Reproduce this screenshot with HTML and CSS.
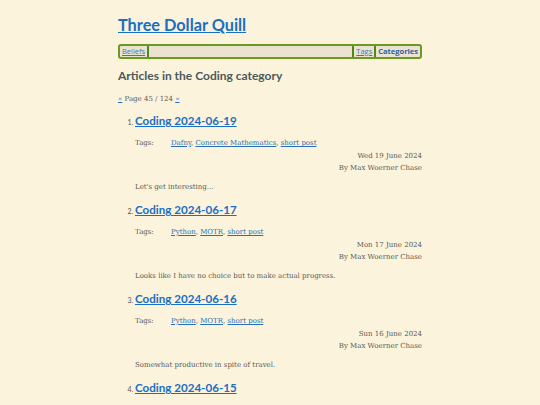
FILE: index.html
```html
<!DOCTYPE html>
<html>
<head>
<meta charset="utf-8">
<link rel="stylesheet" href="styles.css">
</head>
<body>
<div class="page">
  <header class="site-header">
    <h1 class="site-title"><a href="#">Three Dollar Quill</a></h1>
    <nav class="nav">
      <a class="nav-link" href="#">Beliefs</a>
      <span class="nav-fill"></span>
      <a class="nav-link" href="#">Tags</a>
      <a class="nav-link current" href="#">Categories</a>
    </nav>
  </header>
  <main>
    <h2 class="section-title">Articles in the Coding category</h2>
    <p class="pager"><a href="#">«</a> Page 45 / 124 <a href="#">»</a></p>
    <ol class="articles">
      <li class="article">
        <h3 class="article-title"><a href="#">Coding 2024-06-19</a></h3>
        <div class="tags"><span class="tags-label">Tags:</span><span class="tags-list"><a href="#">Dafny</a>, <a href="#">Concrete Mathematics</a>, <a href="#">short post</a></span></div>
        <div class="meta"><div>Wed 19 June 2024</div><div>By Max Woerner Chase</div></div>
        <p class="summary">Let's get interesting...</p>
      </li>
      <li class="article">
        <h3 class="article-title"><a href="#">Coding 2024-06-17</a></h3>
        <div class="tags"><span class="tags-label">Tags:</span><span class="tags-list"><a href="#">Python</a>, <a href="#">MOTR</a>, <a href="#">short post</a></span></div>
        <div class="meta"><div>Mon 17 June 2024</div><div>By Max Woerner Chase</div></div>
        <p class="summary">Looks like I have no choice but to make actual progress.</p>
      </li>
      <li class="article">
        <h3 class="article-title"><a href="#">Coding 2024-06-16</a></h3>
        <div class="tags"><span class="tags-label">Tags:</span><span class="tags-list"><a href="#">Python</a>, <a href="#">MOTR</a>, <a href="#">short post</a></span></div>
        <div class="meta"><div>Sun 16 June 2024</div><div>By Max Woerner Chase</div></div>
        <p class="summary">Somewhat productive in spite of travel.</p>
      </li>
      <li class="article">
        <h3 class="article-title"><a href="#">Coding 2024-06-15</a></h3>
      </li>
    </ol>
  </main>
</div>
</body>
</html>
```
FILE: styles.css
```css
html, body {
  margin: 0;
  padding: 0;
  background: #fbf3dc;
}
body {
  font-family: "DejaVu Serif", serif;
  font-size: 7px;
  color: #5a5a55;
}
a {
  color: #2a6fb5;
}
.page {
  width: 304px;
  margin: 0 auto;
}
.site-header {
  padding-top: 14px;
}
.site-title {
  margin: 0;
  font-family: Lato, sans-serif;
  font-weight: 700;
  font-size: 16.3px;
  line-height: 22px;
}
.site-title a {
  color: #1a6ec4;
}
.nav {
  display: flex;
  align-items: stretch;
  margin-top: 8px;
  height: 11px;
  border: 2px solid #6a9a22;
  border-radius: 3px;
  background: #ebe3cf;
  font-family: "Open Sans", sans-serif;
  font-size: 7.5px;
  line-height: 11px;
}
.nav-link {
  padding: 0 2px;
  color: #3a78b8;
}
.nav-link:first-child {
  border-right: 2px solid #4e8a18;
}
.nav-fill {
  flex: 1;
  border-right: 2px solid #4e8a18;
}
.nav-link + .nav-link {
  border-left: 2px solid #4e8a18;
}
.nav-link.current {
  font-weight: 700;
  color: #2a64a8;
  text-decoration: none;
}
.section-title {
  margin: 9px 0 0;
  font-family: Lato, sans-serif;
  font-weight: 700;
  font-size: 12px;
  line-height: 16px;
  color: #4d5a5a;
}
.pager {
  margin: 10px 0 0;
  line-height: 10px;
}
.articles {
  margin: 9px 0 0;
  padding-left: 17px;
}
.article::marker {
  font-family: Lato, sans-serif;
  font-size: 7px;
  color: #555;
}
.article {
  margin-bottom: 9px;
}
.article-title {
  margin: 0;
  font-family: Lato, sans-serif;
  font-weight: 700;
  font-size: 11.6px;
  line-height: 16px;
}
.article-title a {
  color: #1a6ec4;
}
.tags {
  display: flex;
  margin-top: 8px;
  line-height: 12px;
}
.tags-label {
  width: 36px;
}
.meta {
  margin-top: 1px;
  text-align: right;
  line-height: 12px;
}
.summary {
  margin: 7px 0 0;
  line-height: 12px;
}
```
